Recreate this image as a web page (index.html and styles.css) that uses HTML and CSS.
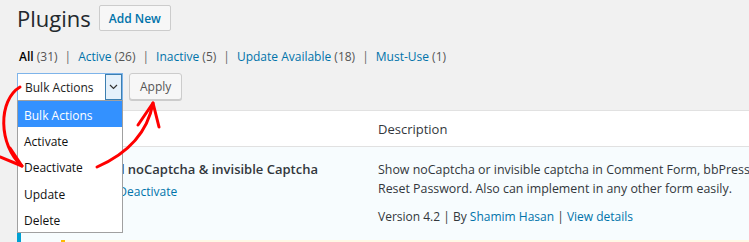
FILE: index.html
```html
<!DOCTYPE html>
<html lang="en">
<head>
<meta charset="utf-8">
<title>Plugins</title>
<link rel="stylesheet" href="styles.css">
</head>
<body>
<div class="wrap">
  <div class="head">
    <h1 class="title">Plugins</h1>
    <a class="add-new">Add New</a>
  </div>
  <ul class="subsubsub">
    <li><span class="current">All</span> <span class="count">(31)</span></li>
    <li class="sep">|</li>
    <li><a>Active</a> <span class="count">(26)</span></li>
    <li class="sep">|</li>
    <li><a>Inactive</a> <span class="count">(5)</span></li>
    <li class="sep">|</li>
    <li><a>Update Available</a> <span class="count">(18)</span></li>
    <li class="sep">|</li>
    <li><a>Must-Use</a> <span class="count">(1)</span></li>
  </ul>
  <div class="actions">
    <div class="select-wrap">
      <div class="select">
        <span class="select-text">Bulk Actions</span>
        <span class="select-arrow"><svg width="9" height="6" viewBox="0 0 9 6"><path d="M1 1 L4.5 4.5 L8 1" fill="none" stroke="#333" stroke-width="1.2"/></svg></span>
      </div>
      <ul class="dropdown">
        <li class="selected">Bulk Actions</li>
        <li>Activate</li>
        <li>Deactivate</li>
        <li>Update</li>
        <li>Delete</li>
      </ul>
    </div>
    <button class="apply">Apply</button>
  </div>
  <table class="plugins">
    <colgroup><col class="c-check"><col class="c-name"><col class="c-desc"></colgroup>
    <thead>
      <tr><td></td><th>Plugin</th><th class="th-desc">Description</th></tr>
    </thead>
    <tbody>
      <tr class="active">
        <th class="check"></th>
        <td class="name">
          <strong class="plugin-title">Advanced noCaptcha &amp; invisible Captcha</strong>
          <div class="row-actions"><a>Settings</a> <span class="pipe">|</span> <a>Deactivate</a></div>
        </td>
        <td class="desc">
          <p class="desc-text">Show noCaptcha or invisible captcha in Comment Form, bbPress Form, BuddyPress Form, WooCommerce Form, Login, Register, Lost Password,<br>Reset Password. Also can implement in any other form easily.</p>
          <p class="meta">Version 4.2 | By <a>Shamim Hasan</a> | <a>View details</a></p>
        </td>
      </tr>
      <tr class="update">
        <th class="check"></th>
        <td colspan="2" class="update-cell"><div class="notice">There is a new version available.</div></td>
      </tr>
    </tbody>
  </table>
</div>
<svg class="arrows" width="749" height="242" viewBox="0 0 749 242">
  <g fill="none" stroke="#ff0000" stroke-width="3" stroke-linecap="round" stroke-linejoin="round">
    <path d="M20 87 C-2 100 -2 145 22 166"/>
    <path d="M10 148 L22 166 L0 157"/>
    <path d="M97 167 Q145 146 153 103"/>
    <path d="M138 125 L153 103 L159 127"/>
  </g>
</svg>
</body>
</html>
```
FILE: styles.css
```css
* { box-sizing: border-box; }
html, body { margin: 0; padding: 0; }
body {
  background: #f1f1f1;
  font-family: "Open Sans", "Noto Sans", sans-serif;
  font-size: 12px;
  color: #444;
  width: 749px;
  height: 242px;
  overflow: hidden;
  position: relative;
}
a { color: #0073aa; text-decoration: none; }

.wrap { padding: 5px 0 0 17px; }

.head { display: flex; align-items: center; gap: 8px; height: 26px; }
.title { margin: 0; font-size: 22px; font-weight: 400; color: #23282d; line-height: 26px; }
.add-new {
  display: inline-flex; align-items: center; height: 26px; padding: 0 9px;
  border: 1px solid #ccc; border-radius: 2px; background: #f7f7f7;
  color: #0073aa; font-weight: 600; font-size: 12px;
}

.subsubsub {
  display: flex; margin: 17px 0 0 2px; padding: 0; list-style: none;
  line-height: 18px; color: #555;
}
.subsubsub .current { color: #000; font-weight: 600; }
.subsubsub .sep { margin: 0 7px; color: #666; }
.subsubsub .count { color: #555; }

.actions { display: flex; align-items: flex-start; gap: 6px; margin-top: 7px; }
.select-wrap { position: relative; width: 106px; height: 28px; }
.select {
  display: flex; align-items: stretch; height: 28px;
  border: 1px solid #7eb4ea; background: #fff;
}
.select-text { flex: 1; padding: 1px 0 0 7px; line-height: 26px; color: #222; }
.select-arrow {
  width: 17px; display: flex; align-items: center; justify-content: center;
  background: #e5f1fb; border: 1px solid #3c7fb1;
}
.dropdown {
  position: absolute; z-index: 2; left: 0; top: 27px; width: 106px;
  margin: 0; padding: 0; list-style: none;
  background: #fff; border: 1px solid #a0a0a0;
}
.dropdown li { height: 26.2px; line-height: 26px; padding: 2px 0 0 6px; color: #111; }
.dropdown li.selected { background: #3391ff; color: #fff; }

.apply {
  height: 27px; padding: 0 10px; margin: 0;
  border: 1px solid #ccc; border-radius: 3px; background: #f7f7f7;
  color: #555; font: inherit; font-size: 12px; box-shadow: 0 1px 0 #ccc;
}

.plugins {
  margin-top: 9px; width: 1000px; table-layout: fixed;
  border-collapse: separate; border-spacing: 0;
  border-top: 1px solid #e1e1e1; background: #fff;
}
.c-check { width: 44px; }
.c-name { width: 317px; }
.plugins thead th, .plugins thead td {
  height: 36px; padding: 0; border-bottom: 1px solid #e1e1e1;
  text-align: left; font-weight: 400; font-size: 13px; color: #32373c;
  vertical-align: middle;
}
.plugins tbody tr { background: #f7fcfe; }
.plugins .check { padding: 0; box-shadow: inset 4px 0 0 #00a0d2; }
.name { vertical-align: top; padding: 13px 10px 0 0; }
.plugin-title { display: block; padding-left: 2px; font-size: 13px; font-weight: 600; color: #32373c; line-height: 19px; white-space: nowrap; }
.row-actions { margin-top: 3px; line-height: 19px; font-size: 12px; color: #ddd; white-space: nowrap; }
.desc { vertical-align: top; padding: 13px 0 11px 0; color: #32373c; }
.desc-text { margin: 0; line-height: 19px; font-size: 12.4px; white-space: nowrap; }
.meta { margin: 9px 0 0; line-height: 19px; white-space: nowrap; }
.update-cell { padding: 3px 0 0; }
.notice { background: #fff8e5; border-left: 4px solid #ffb900; height: 30px; padding: 6px 10px; color: #555; }

.arrows { position: absolute; left: 0; top: 0; z-index: 3; pointer-events: none; }
```
